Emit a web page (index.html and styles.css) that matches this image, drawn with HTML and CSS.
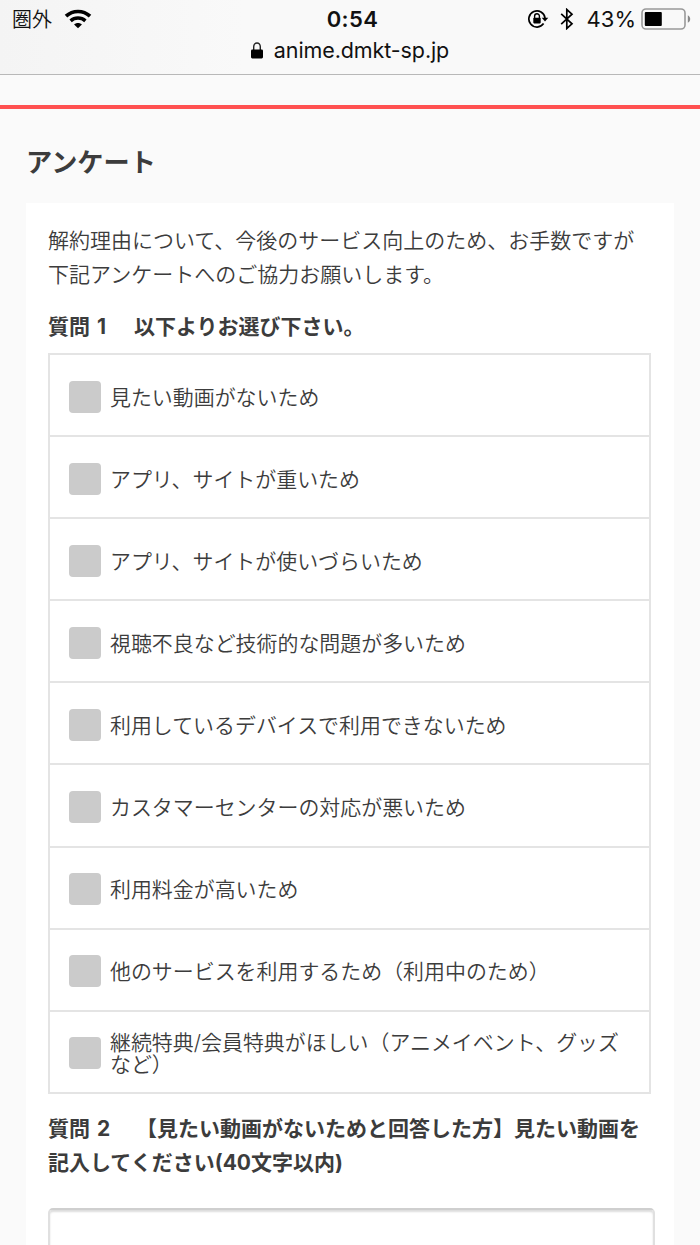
FILE: index.html
```html
<!DOCTYPE html>
<html lang="ja">
<head>
<meta charset="utf-8">
<meta name="viewport" content="width=device-width, initial-scale=1.0">
<title>アンケート</title>
<link rel="stylesheet" href="styles.css">
</head>
<body>
<div id="browser">
	<div class="status">
		<div class="status-left">
			<span class="carrier">圏外</span>
			<svg class="wifi" width="28" height="20" viewBox="0 0 28 20">
				<path d="M2 7.200C8.800 .9 19.200 .9 26 7.200" fill="none" stroke="#000" stroke-width="3.700"/>
				<path d="M6.600 11.900c4.200-3.800 10.600-3.800 14.800 0" fill="none" stroke="#000" stroke-width="3.500"/>
				<path d="M14 19.300l-3.900-3.900c2.200-2 5.600-2 7.800 0z"/>
			</svg>
		</div>
		<div class="clock">0:54</div>
		<div class="status-right">
			<svg class="rotation" width="22" height="20" viewBox="0 0 22 20">
				<path d="M16.600 14.600A8.100 8.100 0 1 1 18 9" fill="none" stroke="#000" stroke-width="1.700"/>
				<path d="M14.700 8.800h6.600L18 12.600z"/>
				<path d="M7.600 9V7.200a2.400 2.400 0 0 1 4.800 0V9" fill="none" stroke="#000" stroke-width="1.400"/>
				<rect x="6.300" y="8.800" width="7.400" height="5.600" rx=".8"/>
			</svg>
			<svg class="bluetooth" width="14" height="22" viewBox="0 0 14 22">
				<path d="M1.200 5.900l10.800 9.900-5.200 4.700V1.500L12 6.200 1.200 16.100" fill="none" stroke="#000" stroke-width="1.700"/>
			</svg>
			<span class="percent">43%</span>
			<svg class="battery" width="50" height="22" viewBox="0 0 50 22">
				<rect x="1" y="1" width="43" height="20" rx="4" fill="none" stroke="#999" stroke-width="1.600"/>
				<rect x="3.800" y="4" width="17" height="14" rx="1"/>
				<path d="M46.800 7.200c3.200 1.800 3.200 5.800 0 7.600z" fill="#888"/>
			</svg>
		</div>
	</div>
	<div class="address">
		<svg width="12" height="17" viewBox="0 0 12 17">
			<path d="M2.700 8V4.700a3.300 3.700 0 0 1 6.600 0V8" fill="none" stroke="#222" stroke-width="1.400"/>
			<rect x="0" y="7.400" width="12" height="9" rx="1.300"/>
		</svg>
		<span>anime.dmkt-sp.jp</span>
	</div>
</div>

<div id="page">
	<h1>アンケート</h1>
	<div class="box">
		<p class="lead">解約理由について、今後のサービス向上のため、お手数ですが下記アンケートへのご協力お願いします。</p>

		<h2><span class="num">質問 1</span>以下よりお選び下さい。</h2>
		<ul class="choices">
			<li><i class="check"></i><span>見たい動画がないため</span></li>
			<li><i class="check"></i><span>アプリ、サイトが重いため</span></li>
			<li><i class="check"></i><span>アプリ、サイトが使いづらいため</span></li>
			<li><i class="check"></i><span>視聴不良など技術的な問題が多いため</span></li>
			<li><i class="check"></i><span>利用しているデバイスで利用できないため</span></li>
			<li><i class="check"></i><span>カスタマーセンターの対応が悪いため</span></li>
			<li><i class="check"></i><span>利用料金が高いため</span></li>
			<li><i class="check"></i><span>他のサービスを利用するため（利用中のため）</span></li>
			<li><i class="check"></i><span>継続特典/会員特典がほしい（アニメイベント、グッズなど）</span></li>
		</ul>

		<h2 class="second"><span class="num">質問 2</span>【見たい動画がないためと回答した方】見たい動画を<br>記入してください(40文字以内)</h2>
		<div class="answer"></div>
	</div>
</div>
</body>
</html>
```
FILE: styles.css
```css
* {
	box-sizing: border-box;
}

body,h1,h2,p,ul {
	margin: 0;
	padding: 0;
}

body {
	display: flex;
	flex-direction: column;
	height: 1245px;
	overflow: hidden;
	background: #fafafa;
	color: #3c3c3c;
	font-family: Inter, "Noto Sans CJK JP", sans-serif;
	font-size: 21px;
}

/* browser bar */
#browser {
	flex: none;
	height: 75px;
	background: linear-gradient(90deg, #f4f4f4, #f9f9f9 35%, #f9f9f9);
	border-bottom: 1px solid #b8b8b8;
	color: #111;
}
.status {
	display: grid;
	grid-template-columns: 1fr auto 1fr;
	align-items: center;
	height: 38px;
	padding: 0 9px 0 12px;
}
.status-left,
.status-right {
	display: flex;
	align-items: center;
}
.status-right {
	justify-content: flex-end;
}
.carrier {
	padding-top: 2px;
	font-size: 20px;
	line-height: 36px;
	font-weight: 350;
}
.wifi {
	margin-left: 12px;
}
.clock {
	padding-left: 2px;
	font-size: 22px;
	font-weight: 600;
	letter-spacing: .4px;
}
.bluetooth {
	margin-left: 11px;
}
.percent {
	margin: 0 5px 0 13px;
	font-size: 22px;
}
.address {
	display: flex;
	align-items: center;
	justify-content: center;
	height: 24px;
	font-size: 21.500px;
	letter-spacing: -.1px;
}
.address svg {
	margin-right: 11px;
}

#page {
	display: flex;
	flex: 1;
	flex-direction: column;
	min-height: 0;
	margin-top: 30px;
	border-top: 4px solid #ff5050;
	padding: 0 26px;
}
h1 {
	flex: none;
	height: 94px;
	padding-top: 35px;
	font-size: 26.200px;
	line-height: 38px;
}
.box {
	display: flex;
	flex: 1;
	flex-direction: column;
	min-height: 0;
	padding: 21px 22px 0;
	background: #fff;
}
.lead {
	width: 596px;
	line-height: 34px;
	font-weight: 350;
}
h2 {
	padding-top: 18px;
	font-size: 21px;
	line-height: 34px;
	white-space: nowrap;
}
.num {
	display: inline-block;
	width: 86px;
	word-spacing: 2px;
}

.choices {
	flex: none;
	width: 603px;
	margin-top: 9px;
	list-style: none;
	border: 2px solid #e4e4e4;
	border-bottom: 0;
	font-size: 20.950px;
	font-weight: 350;
}
.choices li {
	display: flex;
	align-items: center;
	height: 82.100px;
	padding: 3px 18px 0 19px;
	border-bottom: 2px solid #e4e4e4;
	line-height: 22px;
}
.choices span {
	padding-top: 2px;
}
.check {
	flex: none;
	width: 32px;
	height: 32px;
	margin-right: 9px;
	border-radius: 4px;
	background: #cbcbcb;
}
.second .num {
	width: 88px;
}
.answer {
	flex: 1;
	width: 607px;
	margin-top: 28px;
	border: 2px solid #e0e0e0;
	border-top-color: #cfcfcf;
	border-bottom: 0;
	border-radius: 5px 5px 0 0;
	box-shadow: inset 0 2px 2px #ddd;
}
```
